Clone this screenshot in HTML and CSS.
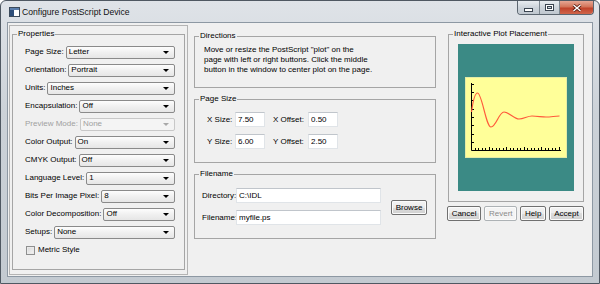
FILE: index.html
```html
<!DOCTYPE html>
<html lang="en">
<head>
  <meta charset="UTF-8">
  <title>Configure PostScript Device</title>
  <link rel="stylesheet" href="styles.css">
</head>
<body>
  <div class="window">
    <div class="titlebar">
      <svg class="app-icon" width="11" height="10" viewBox="0 0 11 10">
        <rect x="0.5" y="0.5" width="10" height="9" fill="#fff" stroke="#3c4b5c"/>
        <rect x="1" y="1" width="4" height="8" fill="#2f4f7a"/>
        <rect x="1" y="1" width="9" height="2" fill="#5b7fae"/>
      </svg>
      <span class="title">Configure PostScript Device</span>
      <div class="caption-buttons">
        <span class="cap cap-min">
          <svg width="9" height="4" viewBox="0 0 9 4"><rect x="0.5" y="0.5" width="8" height="3" fill="#fff" stroke="#3a4450"/></svg>
        </span>
        <span class="cap cap-max">
          <svg width="9" height="7" viewBox="0 0 9 7"><rect x="0.5" y="0.5" width="8" height="6" fill="none" stroke="#3a4450"/><rect x="1.5" y="1.5" width="6" height="4" fill="none" stroke="#fff"/><rect x="2.5" y="2.5" width="4" height="2" fill="none" stroke="#3a4450"/></svg>
        </span>
        <span class="cap cap-close">
          <svg width="10" height="8" viewBox="0 0 10 8"><path d="M1.5 1 L8.5 7 M8.5 1 L1.5 7" stroke="#5a1d12" stroke-width="3"/><path d="M1.5 1 L8.5 7 M8.5 1 L1.5 7" stroke="#fff" stroke-width="1.4"/></svg>
        </span>
      </div>
    </div>

    <div class="client">
      <div class="left-panel">
        <fieldset class="group properties">
          <legend>Properties</legend>
          <div class="group-body">
            <div class="row"><label>Page Size:</label><div class="combo"><span>Letter</span><i class="arrow"></i></div></div>
            <div class="row"><label>Orientation:</label><div class="combo"><span>Portrait</span><i class="arrow"></i></div></div>
            <div class="row"><label>Units:</label><div class="combo"><span>Inches</span><i class="arrow"></i></div></div>
            <div class="row"><label>Encapsulation:</label><div class="combo"><span>Off</span><i class="arrow"></i></div></div>
            <div class="row disabled"><label>Preview Mode:</label><div class="combo"><span>None</span><i class="arrow"></i></div></div>
            <div class="row"><label>Color Output:</label><div class="combo"><span>On</span><i class="arrow"></i></div></div>
            <div class="row"><label>CMYK Output:</label><div class="combo"><span>Off</span><i class="arrow"></i></div></div>
            <div class="row"><label>Language Level:</label><div class="combo"><span>1</span><i class="arrow"></i></div></div>
            <div class="row"><label>Bits Per Image Pixel:</label><div class="combo"><span>8</span><i class="arrow"></i></div></div>
            <div class="row"><label>Color Decomposition:</label><div class="combo"><span>Off</span><i class="arrow"></i></div></div>
            <div class="row"><label>Setups:</label><div class="combo"><span>None</span><i class="arrow"></i></div></div>
            <div class="row check-row"><span class="checkbox"></span><label>Metric Style</label></div>
          </div>
        </fieldset>
      </div>

      <div class="middle">
        <fieldset class="group directions">
          <legend>Directions</legend>
          <p class="hint">Move or resize the PostScript "plot" on the<br>page with left or right buttons. Click the middle<br>button in the window to center plot on the page.</p>
        </fieldset>

        <fieldset class="group page-size">
          <legend>Page Size</legend>
          <div class="size-body">
            <div class="size-row">
              <label class="size-label">X Size:</label><input class="field short" type="text" value="7.50">
              <label class="offset-label">X Offset:</label><input class="field short" type="text" value="0.50">
            </div>
            <div class="size-row">
              <label class="size-label">Y Size:</label><input class="field short" type="text" value="6.00">
              <label class="offset-label">Y Offset:</label><input class="field short" type="text" value="2.50">
            </div>
          </div>
        </fieldset>

        <fieldset class="group filename">
          <legend>Filename</legend>
          <div class="file-body">
            <div class="file-fields">
              <div class="file-row"><label class="file-label">Directory:</label><input class="field long" type="text" value="C:\IDL"></div>
              <div class="file-row"><label class="file-label">Filename:</label><input class="field long" type="text" value="myfile.ps"></div>
            </div>
            <button class="btn browse">Browse</button>
          </div>
        </fieldset>
      </div>

      <div class="right">
        <fieldset class="group placement">
          <legend>Interactive Plot Placement</legend>
          <div class="plot-body">
            <svg class="plot" width="116" height="147" viewBox="0 0 116 147">
              <rect x="7.5" y="33.5" width="101" height="80" fill="#ffff99" stroke="#e4eba6"/>
              <path d="M13.5 39 V106.5 H103" fill="none" stroke="#000"/>
              <path d="M17.5 106 v-2 M20.5 106 v-2 M24.5 106 v-2 M27.5 106 v-2 M31.5 106 v-3 M34.5 106 v-2 M38.5 106 v-2 M41.5 106 v-2 M45.5 106 v-2 M48.5 106 v-3 M52.5 106 v-2 M55.5 106 v-2 M59.5 106 v-2 M62.5 106 v-2 M66.5 106 v-3 M69.5 106 v-2 M73.5 106 v-2 M76.5 106 v-2 M80.5 106 v-2 M83.5 106 v-3 M87.5 106 v-2 M90.5 106 v-2 M94.5 106 v-2 M97.5 106 v-2 M101.5 106 v-3" stroke="#000"/>
              <path d="M14 98.5 h2 M14 90.5 h2 M14 81.5 h2 M14 73.5 h2 M14 65.5 h2 M14 56.5 h2 M14 48.5 h2 M14 40.5 h2" stroke="#000"/>
              <path d="M13.5 68 C15 57 17 49 19.5 49 C24 49 28 83 33 83 C38 83 41 68 46 68 C51 68 56 75 61 75 C66 75 69 72 74 72 C79 72 84 73 88 73 C93 73 97 72 101.5 72" fill="none" stroke="#ff5a3c" stroke-width="1.2"/>
            </svg>
          </div>
        </fieldset>
        <div class="actions">
          <button class="btn cancel">Cancel</button>
          <button class="btn revert" disabled>Revert</button>
          <button class="btn help">Help</button>
          <button class="btn accept">Accept</button>
        </div>
      </div>
    </div>
  </div>
</body>
</html>
```

FILE: styles.css
```css
* {
  box-sizing: border-box;
}
body {
  margin: 0;
  background: #fff;
  font-family: "Liberation Sans", Arial, sans-serif;
  font-size: 8px;
  line-height: 10px;
  color: #000;
}
.window {
  width: 600px;
  height: 284px;
  border: 1px solid #4f5862;
  border-radius: 6px 6px 0 0;
  background: linear-gradient(#dfe3e8, #ccd2d8 40%, #c3cad1);
  display: flex;
  flex-direction: column;
}
.titlebar {
  height: 21px;
  display: flex;
  align-items: center;
  padding-left: 8px;
  padding-right: 5px;
}
.app-icon {
  display: block;
}
.title {
  margin-left: 2px;
  font-size: 8.6px;
  color: #111;
}
.caption-buttons {
  margin-left: auto;
  align-self: flex-start;
  display: flex;
  height: 14px;
  border: 1px solid #5c6670;
  border-top: none;
  border-radius: 0 0 4px 4px;
  overflow: hidden;
}
.cap {
  display: flex;
  align-items: center;
  justify-content: center;
  height: 100%;
  background: linear-gradient(#e8ecf0, #cdd4db 50%, #bfc7cf);
}
.cap-min {
  width: 22px;
  padding-top: 4px;
  border-right: 1px solid #7d8790;
}
.cap-max {
  width: 20px;
  border-right: 1px solid #7d8790;
}
.cap-close {
  width: 33px;
  background: linear-gradient(#e6a694, #d37459 45%, #c0432b 55%, #d0654a);
}
.client {
  margin: 0 6px;
  height: 255px;
  border: 1px solid #8d98a3;
  background: #f0f0f0;
  display: flex;
  align-items: flex-start;
}

/* group boxes */
.group {
  margin: 0;
  padding: 0;
  min-width: 0;
  border: 1px solid #a5a5a5;
}
.group legend {
  margin-left: 4px;
  padding: 0 1px;
  line-height: 10px;
}

/* left column */
.left-panel {
  margin: 2px 0 0 1px;
  width: 179px;
  height: 250px;
  border: 1px solid #b4b4b4;
}
.properties {
  margin: 3px 0 0 2px;
  width: 173px;
  height: 241px;
}
.properties .group-body {
  padding: 4px 9px 0 12px;
}
.row {
  height: 18px;
  display: flex;
  align-items: center;
  gap: 2px;
}
.row label {
  white-space: nowrap;
}
.combo {
  flex: 1;
  height: 13px;
  border: 1px solid #8a8a8a;
  border-radius: 2px;
  background: linear-gradient(#fdfdfd, #f0f0f0 50%, #e6e6e6);
  padding: 0 5px 0 2px;
  display: flex;
  align-items: center;
  justify-content: space-between;
}
.arrow {
  width: 0;
  height: 0;
  border-left: 3px solid transparent;
  border-right: 3px solid transparent;
  border-top: 3px solid #000;
}
.disabled label,
.disabled .combo span {
  color: #a0a0a0;
}
.disabled .combo {
  border-color: #c8c8c8;
  background: #f4f4f4;
}
.disabled .arrow {
  border-top-color: #a8a8a8;
}
.check-row {
  gap: 3px;
  padding-left: 1px;
}
.checkbox {
  width: 9px;
  height: 9px;
  border: 1px solid #8e8f8f;
  background: linear-gradient(135deg, #d6d6d6, #f6f6f6);
  box-shadow: inset 0 0 0 1px #eaeaea;
}

/* middle column */
.middle {
  margin: 8px 0 0 6px;
  width: 242px;
  display: flex;
  flex-direction: column;
  gap: 6px;
}
.directions {
  height: 57px;
}
.hint {
  margin: 0;
  padding: 4px 0 0 9px;
}
.page-size {
  height: 69px;
}
.size-body {
  padding: 8px 0 0 12px;
  display: flex;
  flex-direction: column;
  gap: 7px;
}
.size-row {
  display: flex;
  align-items: center;
  height: 15px;
}
.size-label {
  width: 28px;
}
.offset-label {
  width: 35px;
  margin-left: 8px;
}
.field {
  height: 15px;
  border: 1px solid #e0e4e8;
  border-top-color: #c0c5cb;
  background: #fff;
  font-family: inherit;
  font-size: 8px;
  padding: 0 2px;
  color: #000;
  outline: none;
}
.field.short {
  width: 30px;
}
.field.long {
  width: 145px;
}
.filename {
  height: 70px;
}
.file-body {
  padding: 9px 0 0 7px;
  display: flex;
  align-items: center;
}
.file-fields {
  display: flex;
  flex-direction: column;
  gap: 7px;
}
.file-row {
  display: flex;
  align-items: center;
}
.file-label {
  width: 34px;
}

/* buttons */
.btn {
  height: 15px;
  padding: 0;
  border: 1px solid #707070;
  border-radius: 2px;
  background: linear-gradient(#f4f4f4, #ebebeb 50%, #dddddd 50%, #d0d0d0);
  box-shadow: inset 0 0 0 1px #fbfbfb;
  font-family: inherit;
  font-size: 8px;
  color: #000;
}
.btn:disabled {
  border-color: #adb2b5;
  background: #f4f4f4;
  color: #8a8a8a;
}
.browse {
  width: 36px;
  margin: 2px 0 0 10px;
}

/* right column */
.right {
  margin: 6px 0 0 12px;
  width: 136px;
}
.placement {
  height: 173px;
}
.plot-body {
  padding: 5px 0 0 9px;
}
.plot {
  display: block;
  background: #3b8a85;
}
.actions {
  margin: 4px 0 0 -1px;
  display: flex;
  gap: 3px;
}
.cancel {
  width: 35px;
}
.revert {
  width: 34px;
}
.help {
  width: 26px;
}
.accept {
  width: 36px;
}
```
